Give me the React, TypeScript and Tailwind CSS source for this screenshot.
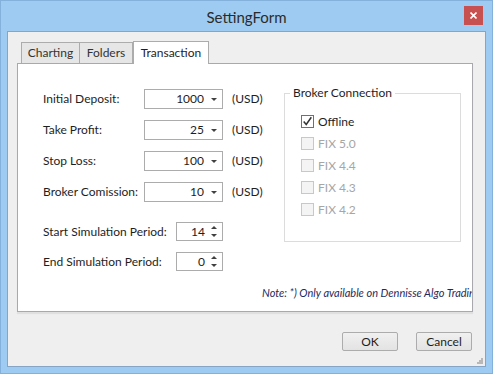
const font = "font-['Segoe_UI','Lato','Noto_Sans',sans-serif]";

function ComboBox({ value }: { value: string }) {
  return (
    <div className="flex items-center w-[79px] h-[20px] bg-white border border-[#acacac]">
      <span className="flex-1 text-right pr-[7px] text-[12px] text-[#1e1e1e] leading-none">{value}</span>
      <svg width="6" height="3" viewBox="0 0 6 3" className="mr-[5px]">
        <path d="M0 0H6L3 3Z" fill="#404040" />
      </svg>
    </div>
  );
}

function SpinBox({ value }: { value: string }) {
  return (
    <div className="flex items-center w-[47px] h-[19px] bg-white border border-[#acacac]">
      <span className="flex-1 text-right pr-[6px] text-[12px] text-[#1e1e1e] leading-none">{value}</span>
      <div className="flex flex-col gap-[5px] mr-[5px]">
        <svg width="6" height="3" viewBox="0 0 6 3">
          <path d="M3 0L6 3H0Z" fill="#404040" />
        </svg>
        <svg width="6" height="3" viewBox="0 0 6 3">
          <path d="M0 0H6L3 3Z" fill="#404040" />
        </svg>
      </div>
    </div>
  );
}

function Check({ label, checked, disabled }: { label: string; checked?: boolean; disabled?: boolean }) {
  return (
    <div className="flex items-center h-[13px] gap-[4px]">
      <div
        className={`w-[13px] h-[13px] border flex items-center justify-center ${
          disabled ? "border-[#c8c8c8] bg-[#f4f4f4]" : "border-[#707070] bg-white"
        }`}
      >
        {checked && (
          <svg width="13" height="13" viewBox="0 0 13 13">
            <path d="M2 6.5L5 10L11 1.5" stroke="#333" strokeWidth="1.8" fill="none" />
          </svg>
        )}
      </div>
      <span className={`text-[12px] leading-none whitespace-nowrap ${disabled ? "text-[#a6a6a6]" : "text-[#1e1e1e]"}`}>
        {label}
      </span>
    </div>
  );
}

const amounts = [
  { label: "Initial Deposit:", value: "1000" },
  { label: "Take Profit:", value: "25" },
  { label: "Stop Loss:", value: "100" },
  { label: "Broker Comission:", value: "10" },
];

export default function App() {
  return (
    <div className={`w-[493px] h-[374px] bg-[#9dcbf1] border border-[#83b1dc] flex flex-col ${font}`}>
      <div className="h-[30px] flex items-center relative">
        <div className="flex-1 text-center text-[15px] text-[#2b2b2b] pt-[2px]">SettingForm</div>
        <div className="absolute right-[9px] top-[5px] w-[19px] h-[19px] bg-[#c75050] flex items-center justify-center">
          <svg width="7" height="7" viewBox="0 0 7 7">
            <path d="M0.5 0.5L6.5 6.5M6.5 0.5L0.5 6.5" stroke="white" strokeWidth="1.6" />
          </svg>
        </div>
      </div>
      <div className="ml-[6px] w-[479px] h-[336px] bg-[#efefef] border border-[#86a5c5] flex flex-col relative">
        <div className="flex items-end h-[31px] pl-[13px]">
          <div className="h-[21px] w-[59px] border border-[#acacac] border-b-0 bg-[#e6e6e6] flex items-center justify-center text-[12px] text-[#333]">
            Charting
          </div>
          <div className="h-[21px] w-[53px] border border-[#acacac] border-b-0 border-l-0 bg-[#e6e6e6] flex items-center justify-center text-[12px] text-[#333]">
            Folders
          </div>
          <div className="h-[23px] w-[76px] border border-[#acacac] border-b-0 bg-white flex items-center justify-center text-[12px] text-[#1e1e1e] mb-[-1px] relative z-10">
            Transaction
          </div>
        </div>
        <div className="ml-[9px] w-[456px] h-[249px] bg-white border border-[#a9a9ad] shadow-[0_2px_1px_rgba(0,0,0,0.06)] flex flex-col overflow-hidden">
          <div className="flex">
            <div className="w-[266px] flex-none flex flex-col pl-[25px] pt-[25px]">
              <div className="flex flex-col gap-[11px]">
                {amounts.map((a) => (
                  <div key={a.label} className="flex items-center h-[20px]">
                    <span className="w-[101px] flex-none whitespace-nowrap text-[12px] text-[#1e1e1e]">{a.label}</span>
                    <ComboBox value={a.value} />
                    <span className="ml-[9px] whitespace-nowrap text-[12px] text-[#1e1e1e]">(USD)</span>
                  </div>
                ))}
              </div>
              <div className="flex flex-col gap-[11px] mt-[20px]">
                <div className="flex items-center h-[19px]">
                  <span className="w-[133px] flex-none whitespace-nowrap text-[12px] text-[#1e1e1e]">Start Simulation Period:</span>
                  <SpinBox value="14" />
                </div>
                <div className="flex items-center h-[19px]">
                  <span className="w-[133px] flex-none whitespace-nowrap text-[12px] text-[#1e1e1e]">End Simulation Period:</span>
                  <SpinBox value="0" />
                </div>
              </div>
            </div>
            <div className="mt-[29px] w-[177px] h-[149px] border border-[#dcdcdc] relative">
              <span className="absolute left-[5px] top-[-8px] bg-white px-[3px] whitespace-nowrap text-[12px] leading-[14px] text-[#1e1e1e]">
                Broker Connection
              </span>
              <div className="flex flex-col gap-[9px] pl-[16px] pt-[21px]">
                <Check label="Offline" checked />
                <Check label="FIX 5.0" disabled />
                <Check label="FIX 4.4" disabled />
                <Check label="FIX 4.3" disabled />
                <Check label="FIX 4.2" disabled />
              </div>
            </div>
          </div>
          <div className="mt-[15px] pl-[244px] whitespace-nowrap text-[11px] leading-[14px] italic text-[#1f2a5c]">
            Note: *) Only available on Dennisse Algo Trading
          </div>
        </div>
        <div className="flex justify-end gap-[18px] pr-[13px] mt-[20px]">
          <div className="w-[56px] h-[19px] rounded-[2px] border border-[#acacac] bg-gradient-to-b from-[#f0f0f0] to-[#e3e3e3] flex items-center justify-center text-[12px] text-[#1e1e1e]">
            OK
          </div>
          <div className="w-[56px] h-[19px] rounded-[2px] border border-[#acacac] bg-gradient-to-b from-[#f0f0f0] to-[#e3e3e3] flex items-center justify-center text-[12px] text-[#1e1e1e]">
            Cancel
          </div>
        </div>
        <svg width="6" height="6" viewBox="0 0 6 6" className="absolute right-[2px] bottom-[2px]">
          <rect x="4" y="0" width="2" height="2" fill="#b8b8b8" />
          <rect x="2" y="2" width="2" height="2" fill="#b8b8b8" />
          <rect x="4" y="2" width="2" height="2" fill="#b8b8b8" />
          <rect x="0" y="4" width="2" height="2" fill="#b8b8b8" />
          <rect x="2" y="4" width="2" height="2" fill="#b8b8b8" />
          <rect x="4" y="4" width="2" height="2" fill="#b8b8b8" />
        </svg>
      </div>
    </div>
  );
}
